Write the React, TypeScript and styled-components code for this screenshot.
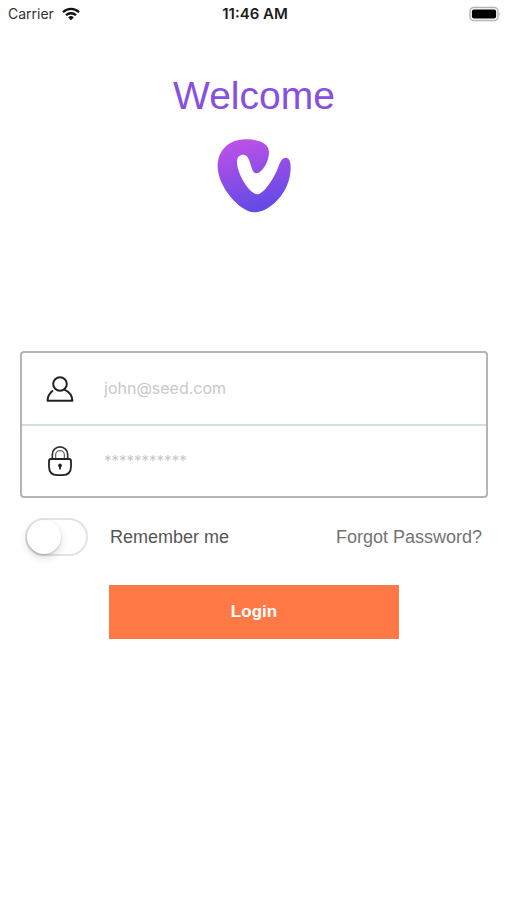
import React, { useState } from "react";
import styled, { createGlobalStyle } from "styled-components";

const GlobalStyle = createGlobalStyle`
  *, *::before, *::after { box-sizing: border-box; }
  body {
    margin: 0;
    background: #fff;
    font-family: "Liberation Sans", Arial, sans-serif;
  }
`;

const Screen = styled.div`
  display: flex;
  flex-direction: column;
  min-height: 100vh;
  background: #fff;
`;

const StatusBar = styled.header`
  display: grid;
  grid-template-columns: 1fr auto 1fr;
  align-items: center;
  height: 28px;
  padding: 0 5px 0 8px;
  font-family: Inter, sans-serif;
  font-size: 14px;
  line-height: 20px;
  color: #1c1c1c;
`;

const Carrier = styled.div`
  display: flex;
  align-items: center;
  gap: 8px;
  color: #333;
`;

const Clock = styled.time`
  font-size: 15px;
  font-weight: 600;
`;

const BatteryIcon = styled.svg`
  justify-self: end;
`;

const Content = styled.main`
  display: flex;
  flex-direction: column;
  align-items: center;
  padding: 44px 19px 0 20px;
`;

const Title = styled.h1`
  margin: 0;
  font-size: 39px;
  line-height: 48px;
  font-weight: 400;
  color: #8750e0;
`;

const Logo = styled.svg`
  margin-top: 19px;
`;

const LoginForm = styled.form`
  display: flex;
  flex-direction: column;
  width: 100%;
  margin-top: 138px;
`;

const FieldCard = styled.div`
  border: 2px solid #b4b4b4;
  border-radius: 4px;
`;

const Field = styled.label`
  display: flex;
  align-items: center;
  gap: 30px;
  height: 71px;
  padding-left: 24px;

  & + & {
    height: 72px;
    border-top: 2px solid #d2e0dc;
  }
`;

const FieldInput = styled.input`
  flex: 1;
  min-width: 0;
  height: 40px;
  padding: 0 0 2px;
  border: 0;
  outline: 0;
  background: transparent;
  font-family: Inter, sans-serif;
  font-size: 16px;
  color: #333;

  &::placeholder {
    color: #c8c8cc;
    opacity: 1;
  }

  &[type="password"] {
    font-size: 15px;
  }
`;

const Options = styled.div`
  display: flex;
  align-items: center;
  justify-content: space-between;
  margin-top: 20px;
  padding: 0 6px 0 5px;
  font-size: 18px;
  line-height: 24px;
`;

const Remember = styled.label`
  display: flex;
  align-items: center;
  gap: 22px;
  color: #555;
`;

const Switch = styled.input`
  appearance: none;
  display: flex;
  align-items: center;
  width: 63px;
  height: 38px;
  margin: 0;
  border: 2px solid #e3e3e3;
  border-radius: 19px;
  background: #fff;
  cursor: pointer;

  &::before {
    content: "";
    width: 34px;
    height: 34px;
    border-radius: 50%;
    background: #fff;
    box-shadow: 0 4px 8px rgba(0, 0, 0, 0.14), 0 1px 2px rgba(0, 0, 0, 0.18);
  }

  &:checked {
    justify-content: flex-end;
    border-color: #8750e0;
    background: #8750e0;
  }
`;

const ForgotLink = styled.a`
  color: #737373;
  text-decoration: none;
`;

const LoginButton = styled.button`
  align-self: center;
  width: 62%;
  height: 54px;
  margin-top: 29px;
  padding: 0;
  border: 0;
  background: #ff7946;
  color: #fff;
  font-family: "Liberation Sans", Arial, sans-serif;
  font-size: 17px;
  font-weight: 700;
  cursor: pointer;
`;

const UserIcon = () => (
  <svg width="28" height="28" viewBox="0 0 28 28" fill="none" stroke="#222" strokeWidth="2" strokeLinecap="round" strokeLinejoin="round" aria-hidden="true">
    <circle cx="14" cy="9" r="6.8" />
    <path d="M6.4 16C3.4 18.4 1.6 21.4 1.6 25.8H26.4C26.2 20.8 23.4 16.8 18.4 14.6" />
  </svg>
);

const LockIcon = () => (
  <svg width="28" height="32" viewBox="0 0 28 32" fill="none" aria-hidden="true">
    <path d="M6.3 14V9.5a7.7 7.7 0 0 1 15.4 0V14" stroke="#333" strokeWidth="1.7" />
    <path d="M9.6 14v-4a4.4 4.4 0 0 1 8.8 0v4" stroke="#666" strokeWidth="1.3" />
    <path d="M5 14H23Q25 14 25 16V21.5Q25 30.2 16.5 30.2H11.5Q3 30.2 3 21.5V16Q3 14 5 14Z" stroke="#222" strokeWidth="1.8" />
    <path d="M14 18.4a2 2 0 0 1 1 3.7L14.8 24.5H13.2L13 22.1a2 2 0 0 1 1-3.7Z" fill="#222" />
  </svg>
);

export default function App() {
  const [remember, setRemember] = useState(false);
  return (
    <>
      <GlobalStyle />
      <Screen>
        <StatusBar>
          <Carrier>
            Carrier
            <svg width="18" height="14" viewBox="0 0 18 14" fill="none" stroke="#111" strokeWidth="2.3" aria-label="Wi-Fi">
              <path d="M1 5.2a11.4 11.4 0 0 1 16 0" />
              <path d="M4 8.3a7.1 7.1 0 0 1 10 0" />
              <path d="M6.2 10.4a4 4 0 0 1 5.6 0L9 13.3Z" fill="#111" stroke="none" />
            </svg>
          </Carrier>
          <Clock>11:46 AM</Clock>
          <BatteryIcon width="33" height="16" viewBox="0 0 33 16" aria-label="Battery full">
            <rect x="1" y="1.5" width="28" height="13" rx="3.8" fill="#fff" stroke="#b4b4b4" strokeWidth="1.4" />
            <rect x="2.9" y="3.4" width="24.2" height="9.2" rx="2" fill="#000" />
            <path d="M30.6 6q1.6 2 0 4Z" fill="#999" />
          </BatteryIcon>
        </StatusBar>
        <Content>
          <Title>Welcome</Title>
          <Logo width="74" height="74" viewBox="36 26 222 222" aria-hidden="true">
            <defs>
              <linearGradient id="logoFill" x1="0" y1="0" x2="0.25" y2="1">
                <stop offset="0" stopColor="#c452e8" />
                <stop offset="1" stopColor="#654ae6" />
              </linearGradient>
            </defs>
            <path
              fill="url(#logoFill)"
              d="M122 27C70 27 38 62 38 108C38 172 108 246 147 246C194 246 257 186 257 112C257 92 252 82 243 82C232 82 227 92 221 107C207 147 175 192 157 192C134 192 96 130 96 95C96 80 104 73 115 73C139 73 135 129 155 129C170 129 192 95 192 66C192 40 165 27 122 27Z"
            />
          </Logo>
          <LoginForm onSubmit={(e: React.FormEvent) => e.preventDefault()}>
            <FieldCard>
              <Field>
                <UserIcon />
                <FieldInput type="email" aria-label="Email" placeholder="john@seed.com" />
              </Field>
              <Field>
                <LockIcon />
                <FieldInput type="password" aria-label="Password" placeholder="***********" />
              </Field>
            </FieldCard>
            <Options>
              <Remember>
                <Switch
                  type="checkbox"
                  role="switch"
                  checked={remember}
                  onChange={(e) => setRemember(e.target.checked)}
                />
                Remember me
              </Remember>
              <ForgotLink href="#forgot">Forgot Password?</ForgotLink>
            </Options>
            <LoginButton type="submit">Login</LoginButton>
          </LoginForm>
        </Content>
      </Screen>
    </>
  );
}
